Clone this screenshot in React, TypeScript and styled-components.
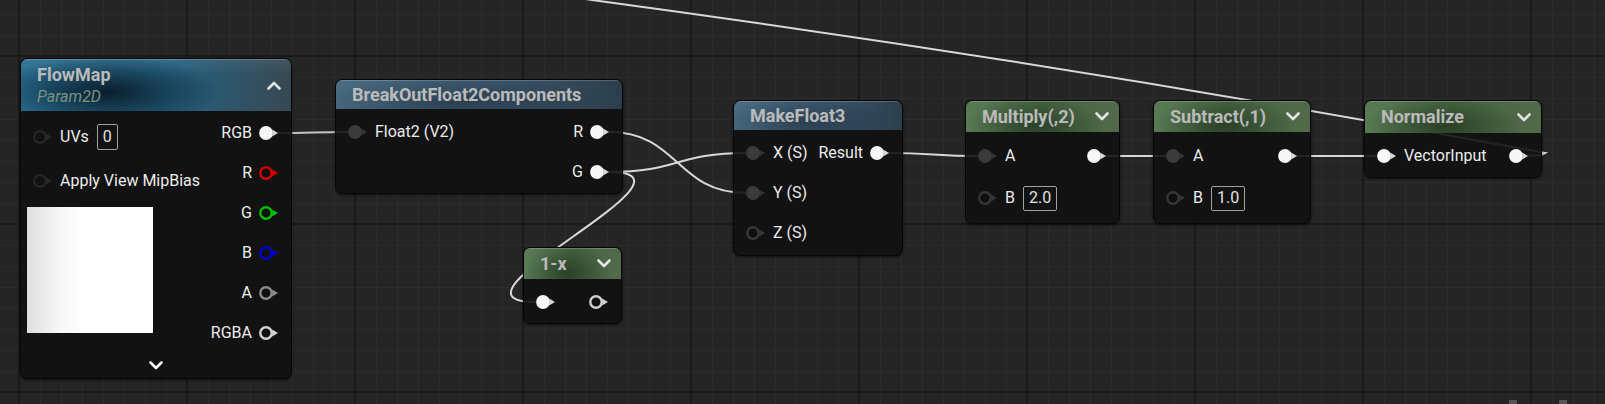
import React from 'react';
import styled, { createGlobalStyle } from 'styled-components';

const GlobalStyle = createGlobalStyle`
  html, body { margin: 0; padding: 0; background: #252525; }
  body { font-family: Roboto, "Noto Sans", sans-serif; }
  #root { width: 1605px; height: 404px; }
`;

const Canvas = styled.div`
  position: relative;
  width: 1605px;
  height: 404px;
  overflow: hidden;
  background-color: #252525;
  background-image:
    linear-gradient(to right, #1a1a1a 2px, transparent 2px),
    linear-gradient(to bottom, #1a1a1a 2px, transparent 2px),
    linear-gradient(to right, #2c2c2c 1px, transparent 1px),
    linear-gradient(to bottom, #2c2c2c 1px, transparent 1px);
  background-size: 168px 168px, 168px 168px, 21px 21px, 21px 21px;
  background-position: 18px 55px, 18px 55px, 19px 14px, 19px 14px;
`;

const WireLayer = styled.svg`
  position: absolute;
  left: 0;
  top: 0;
  width: 1605px;
  height: 404px;
  pointer-events: none;
`;

const Stub = styled.div<{ $x: number }>`
  position: absolute;
  left: ${p => p.$x}px;
  top: 400px;
  width: 8px;
  height: 6px;
  background: #555555;
  border-radius: 1px;
`;

type Kind = 'param' | 'func' | 'math';

const headerBg: Record<Kind, string> = {
  param:
    'radial-gradient(ellipse 42% 70% at 32% 64%, rgba(4,18,28,0.85), rgba(4,18,28,0) 100%), linear-gradient(180deg, rgba(255,255,255,0.08) 0%, rgba(255,255,255,0) 30%), linear-gradient(90deg, #2c769c 0%, #27698c 55%, #3b4d57 100%)',
  func:
    'radial-gradient(ellipse 50% 90% at 42% 75%, rgba(18,30,38,0.45), rgba(18,30,38,0) 100%), linear-gradient(90deg, #50738a 0%, #42607a 50%, #2f4250 100%)',
  math:
    'radial-gradient(ellipse 45% 95% at 45% 80%, rgba(18,34,18,0.55), rgba(18,34,18,0) 100%), linear-gradient(90deg, #5f835a 0%, #4d6d48 50%, #57714f 100%)',
};

const NodeBox = styled.div<{ $x: number; $y: number; $w: number }>`
  position: absolute;
  left: ${p => p.$x}px;
  top: ${p => p.$y}px;
  width: ${p => p.$w}px;
  box-sizing: border-box;
  border: 1px solid #060606;
  border-radius: 7px;
  overflow: hidden;
  background: rgba(15, 17, 16, 0.9);
  box-shadow: 0 1px 3px rgba(0, 0, 0, 0.6);
  color: #ececec;
`;

const Header = styled.div<{ $kind: Kind; $h: number }>`
  height: ${p => p.$h}px;
  box-sizing: border-box;
  display: flex;
  align-items: center;
  justify-content: space-between;
  padding: 0 10px 0 16px;
  background: ${p => headerBg[p.$kind]};
  opacity: 0.93;
  box-shadow: inset 0 1px 0 rgba(255, 255, 255, 0.22);
`;

const TitleBlock = styled.div`
  display: flex;
  flex-direction: column;
`;

const Title = styled.div`
  font-size: 18px;
  font-weight: 700;
  line-height: 20px;
  color: #c8c8c8;
  white-space: nowrap;
`;

const Subtitle = styled.div`
  margin-top: 3px;
  font-size: 16px;
  font-style: italic;
  line-height: 18px;
  color: #7f9e8c;
`;

const ChevronSvg = styled.svg`
  display: block;
  flex: none;
`;

const Chevron = ({ dir }: { dir: 'up' | 'down' }) => (
  <ChevronSvg width="14" height="9" viewBox="0 0 14 9">
    <path
      d={dir === 'down' ? 'M1.5 1.5 L7 7 L12.5 1.5' : 'M1.5 7.5 L7 2 L12.5 7.5'}
      stroke="#f4f4f4"
      strokeWidth="2.6"
      fill="none"
      strokeLinecap="round"
      strokeLinejoin="round"
    />
  </ChevronSvg>
);

const Body = styled.div<{ $pt: number; $pb: number }>`
  display: flex;
  justify-content: space-between;
  padding: ${p => p.$pt}px 0 ${p => p.$pb}px;
`;

const Col = styled.div<{ $end?: boolean; $pt?: number }>`
  display: flex;
  flex-direction: column;
  align-items: ${p => (p.$end ? 'flex-end' : 'flex-start')};
  padding-top: ${p => p.$pt ?? 0}px;
`;

const Row = styled.div<{ $h?: number; $out?: boolean }>`
  display: flex;
  align-items: center;
  height: ${p => p.$h ?? 40}px;
  gap: ${p => (p.$out ? 7 : 8)}px;
  padding: ${p => (p.$out ? '0 13px 0 0' : '0 0 0 12px')};
  font-size: 16px;
  line-height: 20px;
  white-space: nowrap;
`;

const ValueBox = styled.div<{ $h?: number }>`
  box-sizing: border-box;
  height: ${p => p.$h ?? 25}px;
  padding: 0 5px;
  display: flex;
  align-items: center;
  border: 1px solid #a0a0a0;
  border-radius: 2px;
  color: #e0e0e0;
  font-size: 16px;
`;

const Preview = styled.div`
  margin: 4px 0 0 6px;
  width: 126px;
  height: 126px;
  background: linear-gradient(90deg, #dedede 0%, #f6f6f6 25%, #ffffff 45%, #ffffff 100%);
`;

const Footer = styled.div`
  height: 25px;
  display: flex;
  align-items: center;
  justify-content: center;
`;

const PinSvg = styled.svg`
  display: block;
  flex: none;
`;

type PinKind = 'white' | 'grey' | 'dark' | 'ring';

const Pin = ({ kind, color = '#cfcfcf' }: { kind: PinKind; color?: string }) => {
  let circle: React.ReactNode;
  let tri = '#dcdcdc';
  if (kind === 'white') {
    circle = <circle cx="7" cy="8" r="6.9" fill="#f7f7f7" />;
    tri = '#d8d8d8';
  } else if (kind === 'grey') {
    circle = <circle cx="7" cy="8" r="6.9" fill="#3b3b3b" />;
    tri = '#343434';
  } else if (kind === 'dark') {
    circle = <circle cx="7" cy="8" r="5.9" fill="#121212" stroke="#2a2a2a" strokeWidth="1.8" />;
    tri = '#2a2a2a';
  } else {
    circle = <circle cx="7" cy="8" r="5.7" fill="#0f0f0f" stroke={color} strokeWidth="2.4" />;
    tri = color;
  }
  return (
    <PinSvg width="19" height="16" viewBox="0 0 19 16">
      {circle}
      <path d="M13.2 4.6 L19 8 L13.2 11.4 Z" fill={tri} />
    </PinSvg>
  );
};

const Wires = () => (
  <WireLayer viewBox="0 0 1605 404">
    <g fill="none" stroke="#d8d8d8" strokeWidth="2" strokeLinecap="round">
      <path d="M1528 156 L1541 155 L1545 153 Q1068.5 64.2 592 0 L540 -8" />
      <path d="M277 133 C310 133 315 132 348 132" stroke="#c4c4c4" />
      <path d="M609 132 C679 132 676 193 746 193" />
      <path d="M609 172 C679 172 676 153 746 153" />
      <path d="M609 172 C719 172 426 302 536 302" />
      <path d="M889 153 C932 153 935 156 978 156" />
      <path d="M1106 156 L1166 156" />
      <path d="M1297 156 L1377 156" />
    </g>
  </WireLayer>
);

const FlowMapNode = () => (
  <NodeBox $x={20} $y={58} $w={272}>
    <Header $kind="param" $h={52}>
      <TitleBlock>
        <Title>FlowMap</Title>
        <Subtitle>Param2D</Subtitle>
      </TitleBlock>
      <Chevron dir="up" />
    </Header>
    <Body $pt={0} $pb={0}>
      <Col $pt={4}>
        <Row $h={44}>
          <Pin kind="dark" />
          <span>UVs</span>
          <ValueBox $h={26}>0</ValueBox>
        </Row>
        <Row $h={44}>
          <Pin kind="dark" />
          <span>Apply View MipBias</span>
        </Row>
        <Preview />
      </Col>
      <Col $end $pt={2}>
        <Row $out>
          <span>RGB</span>
          <Pin kind="white" />
        </Row>
        <Row $out>
          <span>R</span>
          <Pin kind="ring" color="#d40000" />
        </Row>
        <Row $out>
          <span>G</span>
          <Pin kind="ring" color="#00c000" />
        </Row>
        <Row $out>
          <span>B</span>
          <Pin kind="ring" color="#0000d0" />
        </Row>
        <Row $out>
          <span>A</span>
          <Pin kind="ring" color="#8c8c8c" />
        </Row>
        <Row $out>
          <span>RGBA</span>
          <Pin kind="ring" color="#d4d4d4" />
        </Row>
      </Col>
    </Body>
    <Footer>
      <Chevron dir="down" />
    </Footer>
  </NodeBox>
);

const BreakOutNode = () => (
  <NodeBox $x={335} $y={79} $w={288}>
    <Header $kind="func" $h={29}>
      <Title>BreakOutFloat2Components</Title>
    </Header>
    <Body $pt={3} $pb={1}>
      <Col>
        <Row>
          <Pin kind="grey" />
          <span>Float2 (V2)</span>
        </Row>
      </Col>
      <Col $end>
        <Row $out>
          <span>R</span>
          <Pin kind="white" />
        </Row>
        <Row $out>
          <span>G</span>
          <Pin kind="white" />
        </Row>
      </Col>
    </Body>
  </NodeBox>
);

const OneMinusNode = () => (
  <NodeBox $x={523} $y={247} $w={99}>
    <Header $kind="math" $h={31}>
      <Title>1-x</Title>
      <Chevron dir="down" />
    </Header>
    <Body $pt={3} $pb={1}>
      <Col>
        <Row>
          <Pin kind="white" />
        </Row>
      </Col>
      <Col $end>
        <Row $out>
          <Pin kind="ring" color="#d0d0d0" />
        </Row>
      </Col>
    </Body>
  </NodeBox>
);

const MakeFloat3Node = () => (
  <NodeBox $x={733} $y={100} $w={170}>
    <Header $kind="func" $h={29}>
      <Title>MakeFloat3</Title>
    </Header>
    <Body $pt={3} $pb={2}>
      <Col>
        <Row>
          <Pin kind="grey" />
          <span>X (S)</span>
        </Row>
        <Row>
          <Pin kind="grey" />
          <span>Y (S)</span>
        </Row>
        <Row>
          <Pin kind="ring" color="#383838" />
          <span>Z (S)</span>
        </Row>
      </Col>
      <Col $end>
        <Row $out>
          <span>Result</span>
          <Pin kind="white" />
        </Row>
      </Col>
    </Body>
  </NodeBox>
);

const MathNode = ({ x, w, title, value }: { x: number; w: number; title: string; value: string }) => (
  <NodeBox $x={x} $y={100} $w={w}>
    <Header $kind="math" $h={31}>
      <Title>{title}</Title>
      <Chevron dir="down" />
    </Header>
    <Body $pt={4} $pb={3}>
      <Col>
        <Row>
          <Pin kind="grey" />
          <span>A</span>
        </Row>
        <Row $h={44}>
          <Pin kind="ring" color="#363636" />
          <span>B</span>
          <ValueBox>{value}</ValueBox>
        </Row>
      </Col>
      <Col $end>
        <Row $out>
          <Pin kind="white" />
        </Row>
      </Col>
    </Body>
  </NodeBox>
);

const NormalizeNode = () => (
  <NodeBox $x={1364} $y={100} $w={178}>
    <Header $kind="math" $h={32}>
      <Title>Normalize</Title>
      <Chevron dir="down" />
    </Header>
    <Body $pt={3} $pb={1}>
      <Col>
        <Row>
          <Pin kind="white" />
          <span>VectorInput</span>
        </Row>
      </Col>
      <Col $end>
        <Row $out>
          <Pin kind="white" />
        </Row>
      </Col>
    </Body>
  </NodeBox>
);

export default function App() {
  return (
    <>
      <GlobalStyle />
      <Canvas>
        <Wires />
        <FlowMapNode />
        <BreakOutNode />
        <OneMinusNode />
        <MakeFloat3Node />
        <MathNode x={965} w={155} title="Multiply(,2)" value="2.0" />
        <MathNode x={1153} w={158} title="Subtract(,1)" value="1.0" />
        <NormalizeNode />
        <Stub $x={1509} />
        <Stub $x={1559} />
      </Canvas>
    </>
  );
}
